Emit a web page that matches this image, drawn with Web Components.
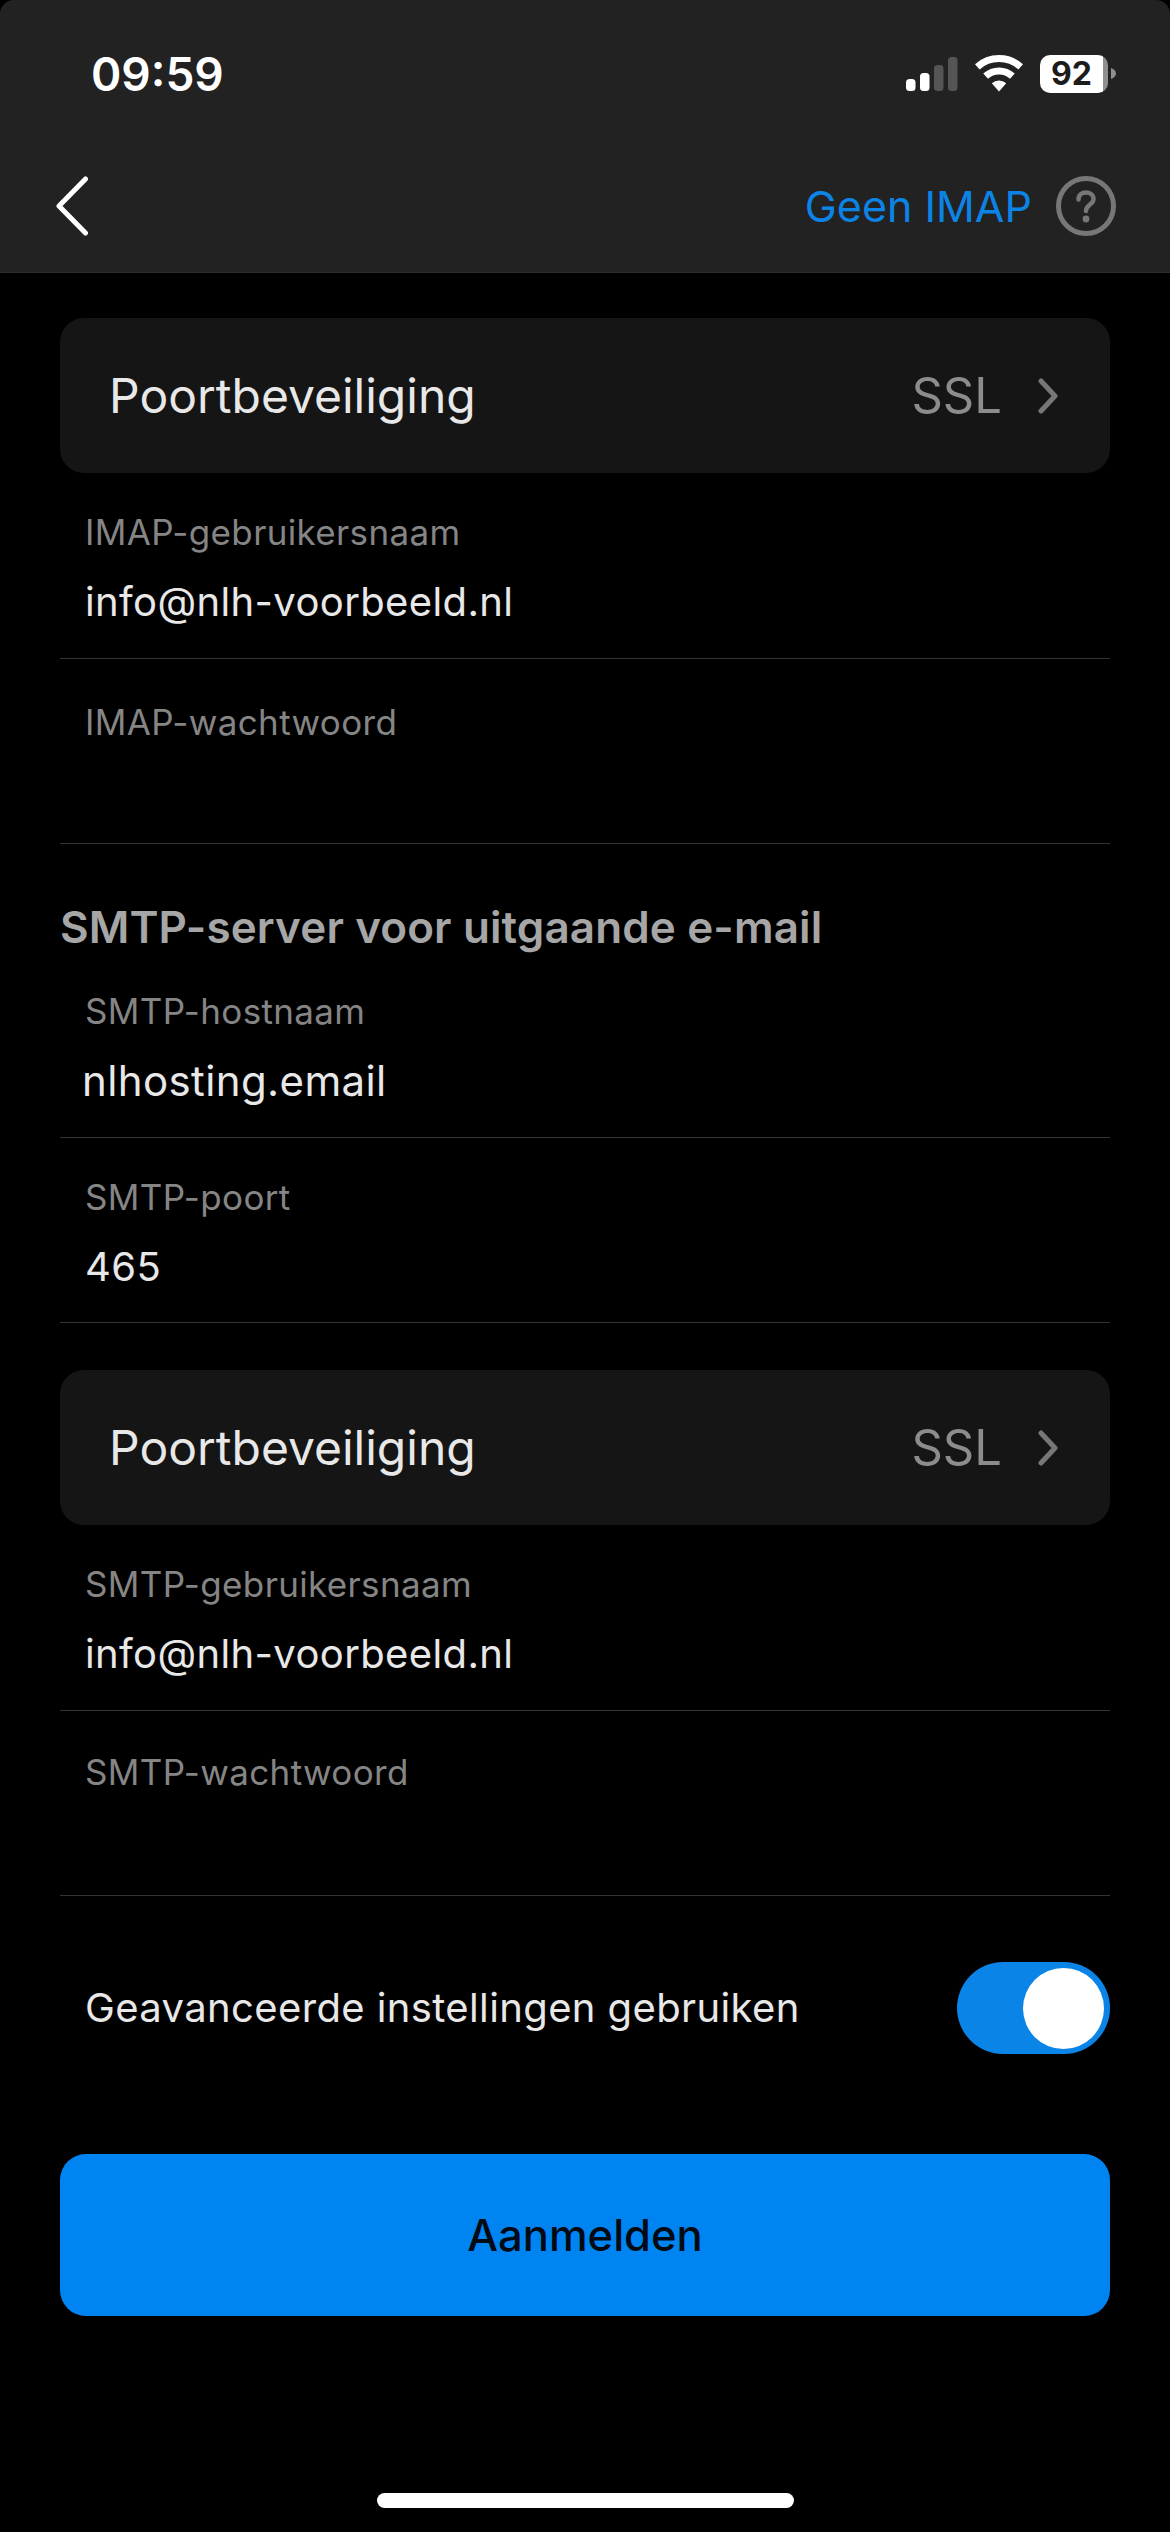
<!DOCTYPE html>
<html lang="nl">
<head>
<meta charset="utf-8">
<title>Accountinstellingen</title>
<style>
  html, body { margin: 0; padding: 0; background: #000; }
  body { font-family: Inter, "Liberation Sans", sans-serif; }
</style>
</head>
<body>
<app-screen>
  <app-header slot="header" action="Geen IMAP" time="09:59" battery="92"></app-header>

  <select-row label="Poortbeveiliging" value="SSL"></select-row>
  <text-field label="IMAP-gebruikersnaam">info@nlh-voorbeeld.nl</text-field>
  <text-field label="IMAP-wachtwoord" style="--label-top: 43px"></text-field>

  <section-title>SMTP-server voor uitgaande e-mail</section-title>
  <text-field label="SMTP-hostnaam" nudge>nlhosting.email</text-field>
  <text-field label="SMTP-poort">465</text-field>

  <select-row class="second" label="Poortbeveiliging" value="SSL"></select-row>
  <text-field label="SMTP-gebruikersnaam">info@nlh-voorbeeld.nl</text-field>
  <text-field label="SMTP-wachtwoord" style="--label-top: 41px"></text-field>

  <toggle-row>Geavanceerde instellingen gebruiken</toggle-row>
  <primary-button>Aanmelden</primary-button>
</app-screen>

<script>
class AppScreen extends HTMLElement {
  constructor() {
    super();
    this.attachShadow({ mode: 'open' }).innerHTML = `
      <style>
        :host {
          display: flex;
          flex-direction: column;
          width: 1170px;
          height: 2532px;
          background: #000;
          overflow: hidden;
          border-radius: 14px;
        }
        main {
          flex: 1;
          display: flex;
          flex-direction: column;
          padding: 45px 60px 0;
        }
        .home {
          flex: none;
          width: 417px;
          height: 15px;
          margin: 0 auto 24px;
          background: #fff;
          border-radius: 8px;
        }
      </style>
      <slot name="header"></slot>
      <main><slot></slot></main>
      <div class="home"></div>
    `;
  }
}

class AppHeader extends HTMLElement {
  constructor() {
    super();
    this.attachShadow({ mode: 'open' });
  }

  connectedCallback() {
    const action = this.getAttribute('action');
    const time = this.getAttribute('time');
    const battery = this.getAttribute('battery');
    this.shadowRoot.innerHTML = `
      <style>
        :host {
          display: block;
          height: 273px;
          box-sizing: border-box;
          background: #222;
          border-bottom: 1px solid #2c2c2c;
        }
        .status {
          display: flex;
          align-items: center;
          justify-content: space-between;
          height: 37px;
          padding: 55px 54px 0 91px;
        }
        .time {
          margin-top: 2px;
          font: 600 46px/37px Inter, "Liberation Sans", sans-serif;
          color: #fff;
        }
        .icons { display: flex; align-items: flex-start; }
        .signal { margin: 2px 17px 0 0; }
        .wifi { margin-right: 17px; }
        .battery {
          position: relative;
          width: 68px;
          height: 38px;
          box-sizing: border-box;
          padding-right: 5px;
          border-radius: 10px;
          background: linear-gradient(to right, #fff 63px, #8f8f8f 63px);
          color: #1c1c1c;
          font: 700 32px/38px Inter, "Liberation Sans", sans-serif;
          text-align: center;
        }
        .cap { margin: 13px 0 0 3px; }
        nav {
          display: flex;
          align-items: center;
          justify-content: space-between;
          padding: 84px 54px 0 56px;
        }
        nav svg { display: block; }
        .right { display: flex; align-items: center; gap: 24px; }
        .action {
          font: 400 43px/60px Inter, "Liberation Sans", sans-serif;
          color: #0b84e6;
        }
      </style>
      <div class="status">
        <span class="time">${time}</span>
        <div class="icons">
          <svg class="signal" width="52" height="34" viewBox="0 0 52 34">
            <rect x="0" y="22" width="9.5" height="12" rx="3.5" fill="#fff"/>
            <rect x="14" y="16" width="9.5" height="18" rx="3.5" fill="#fff"/>
            <rect x="28" y="8" width="9.5" height="26" rx="3.5" fill="#555"/>
            <rect x="42" y="0" width="9.5" height="34" rx="3.5" fill="#555"/>
          </svg>
          <svg class="wifi" width="48" height="37" viewBox="0 0 48 37">
            <g fill="none" stroke="#fff" stroke-width="7">
              <path d="M2.3 11.85A32.5 32.5 0 0 1 45.7 11.85"/>
              <path d="M10.6 21.14A20 20 0 0 1 37.4 21.14"/>
            </g>
            <path d="M24 36.5L16.8 28.3A10.5 10.5 0 0 1 31.2 28.3Z" fill="#fff"/>
          </svg>
          <div class="battery">${battery}</div>
          <svg class="cap" width="5" height="11" viewBox="0 0 5 11"><path d="M0 0C3 1 5 3 5 5.5S3 10 0 11Z" fill="#8f8f8f"/></svg>
        </div>
      </div>
      <nav>
        <svg width="32" height="60" viewBox="0 0 32 60" fill="none" stroke="#fff" stroke-width="5" stroke-linecap="round" stroke-linejoin="round">
          <path d="M29.5 3L3 30L29.5 57"/>
        </svg>
        <div class="right">
          <span class="action">${action}</span>
          <svg width="60" height="60" viewBox="0 0 60 60">
            <circle cx="30" cy="30" r="27.5" fill="none" stroke="#777" stroke-width="5"/>
            <path d="M22.5 23.5C22.5 19 26 16.5 30 16.5S37.5 19 37.5 23C37.5 28.5 30 28.5 30 35" fill="none" stroke="#777" stroke-width="4.5" stroke-linecap="round"/>
            <circle cx="30" cy="43" r="3.4" fill="#777"/>
          </svg>
        </div>
      </nav>
    `;
  }
}

class SelectRow extends HTMLElement {
  constructor() {
    super();
    this.attachShadow({ mode: 'open' });
  }

  connectedCallback() {
    this.shadowRoot.innerHTML = `
      <style>
        :host {
          display: flex;
          align-items: center;
          flex: none;
          height: 155px;
          box-sizing: border-box;
          padding: 0 52px 0 49px;
          background: #151515;
          border-radius: 24px;
        }
        :host(.second) { margin-top: 47px; }
        .label {
          flex: 1;
          font: 400 48px/58px Inter, "Liberation Sans", sans-serif;
          color: #e8e8e8;
        }
        .value {
          font: 400 49px/58px Inter, "Liberation Sans", sans-serif;
          color: #8c8c8c;
          margin-right: 36px;
        }
        svg { display: block; }
      </style>
      <span class="label">${this.getAttribute('label')}</span>
      <span class="value">${this.getAttribute('value')}</span>
      <svg width="20" height="36" viewBox="0 0 20 36" fill="none" stroke="#777" stroke-width="5" stroke-linecap="round" stroke-linejoin="round">
        <path d="M3 3L17 18L3 33"/>
      </svg>
    `;
  }
}

class TextField extends HTMLElement {
  constructor() {
    super();
    this.attachShadow({ mode: 'open' });
  }

  connectedCallback() {
    // the hostname sits a bit further left and is set larger in the app
    const nudge = this.hasAttribute('nudge');
    this.shadowRoot.innerHTML = `
      <style>
        :host {
          display: block;
          flex: none;
          height: 185.5px;
          box-sizing: border-box;
          border-bottom: 1px solid #333;
        }
        .label {
          padding: var(--label-top, 39px) 0 0 25px;
          font: 400 35px/40px Inter, "Liberation Sans", sans-serif;
          letter-spacing: 0.35px;
          color: #858585;
        }
        .value {
          min-height: 50px;
          padding: 25px 0 0 ${nudge ? 22 : 25}px;
          font: 400 ${nudge ? 42 : 40}px/50px Inter, "Liberation Sans", sans-serif;
          letter-spacing: 0.38px;
          color: #e8e8e8;
        }
      </style>
      <div class="label">${this.getAttribute('label')}</div>
      <div class="value"><slot></slot></div>
    `;
  }
}

class SectionTitle extends HTMLElement {
  constructor() {
    super();
    this.attachShadow({ mode: 'open' }).innerHTML = `
      <style>
        :host {
          display: block;
          flex: none;
          height: 108px;
          box-sizing: border-box;
          padding-top: 55px;
          font: 600 44px/56px Inter, "Liberation Sans", sans-serif;
          letter-spacing: 0.12px;
          color: #a6a6a6;
        }
      </style>
      <slot></slot>
    `;
  }
}

class ToggleRow extends HTMLElement {
  constructor() {
    super();
    this.attachShadow({ mode: 'open' }).innerHTML = `
      <style>
        :host {
          display: flex;
          align-items: center;
          justify-content: space-between;
          flex: none;
          margin-top: 66px;
          padding-left: 25px;
          font: 400 40px/50px Inter, "Liberation Sans", sans-serif;
          letter-spacing: 0.38px;
          color: #e8e8e8;
        }
        .track {
          display: flex;
          justify-content: flex-end;
          align-items: center;
          width: 153px;
          height: 92px;
          box-sizing: border-box;
          padding-right: 6px;
          background: #0b84e8;
          border-radius: 46px;
        }
        .knob {
          width: 81px;
          height: 81px;
          background: #fff;
          border-radius: 50%;
        }
      </style>
      <span><slot></slot></span>
      <div class="track"><div class="knob"></div></div>
    `;
  }
}

class PrimaryButton extends HTMLElement {
  constructor() {
    super();
    this.attachShadow({ mode: 'open' }).innerHTML = `
      <style>
        :host {
          display: flex;
          align-items: center;
          justify-content: center;
          flex: none;
          height: 162px;
          margin-top: 100px;
          background: #0084f2;
          border-radius: 26px;
          font: 500 43.5px/54px Inter, "Liberation Sans", sans-serif;
          color: #020a14;
        }
      </style>
      <slot></slot>
    `;
  }
}

customElements.define('app-screen', AppScreen);
customElements.define('app-header', AppHeader);
customElements.define('select-row', SelectRow);
customElements.define('text-field', TextField);
customElements.define('section-title', SectionTitle);
customElements.define('toggle-row', ToggleRow);
customElements.define('primary-button', PrimaryButton);
</script>
</body>
</html>
